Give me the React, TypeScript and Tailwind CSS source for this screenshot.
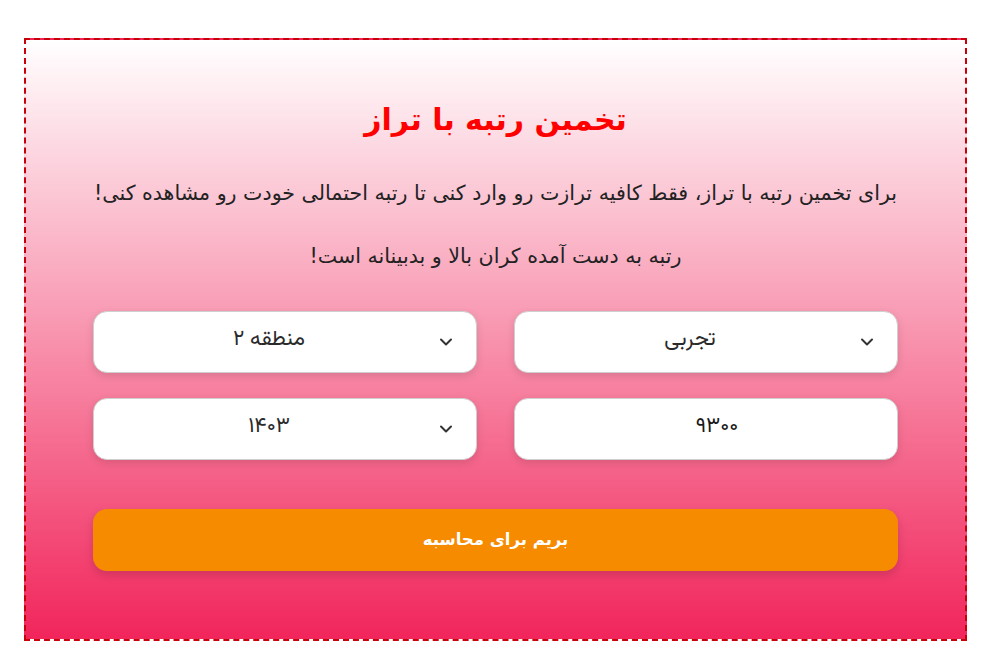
import { ChevronDown } from "lucide-react";

function FakeSelect({ label }: { label: string }) {
    return (
        <div className="relative h-[62px] rounded-[14px] border border-[#cfcfcf] bg-white shadow-[0_3px_8px_rgba(0,0,0,0.12)] flex items-center justify-center pr-[32px]">
            <span className="font-['Vazirmatn',sans-serif] text-[21.5px] leading-[30px] text-[#2a2a2a] pb-1">{label}</span>
            <ChevronDown className="absolute right-[20px] top-1/2 -translate-y-1/2 w-[20px] h-[20px] text-[#333]" strokeWidth={2.4} />
        </div>
    );
}

export default function App() {
    return (
        <div className="min-h-screen bg-white pt-[38px] pl-[24px] font-['DejaVu_Sans',sans-serif]">
            <div
                dir="rtl"
                className="w-[943px] h-[603px] border-2 border-dashed border-[#c8000a] bg-[linear-gradient(to_bottom,#ffffff,#f1255b)] px-[67px] pt-[58px]"
            >
                {/* Header */}
                <h1 className="text-center text-[30px] font-bold text-[#ff0000] leading-[44px]">
                    تخمین رتبه با تراز
                </h1>
                <p className="mt-[36px] text-center text-[20.6px] text-[#222] leading-[30px] whitespace-nowrap">
                    برای تخمین رتبه با تراز، فقط کافیه ترازت رو وارد کنی تا رتبه احتمالی خودت رو مشاهده کنی!
                </p>
                <p className="mt-[33px] text-center text-[20.6px] text-[#222] leading-[30px]">
                    رتبه به دست آمده کران بالا و بدبینانه است!
                </p>

                {/* Form */}
                <div className="mt-[40px] grid grid-cols-2 gap-x-[37px] gap-y-[25px]">
                    <FakeSelect label="تجربی" />
                    <FakeSelect label="منطقه ۲" />
                    <input
                        type="text"
                        defaultValue="۹۳۰۰"
                        className="h-[62px] rounded-[14px] border border-[#cfcfcf] bg-white shadow-[0_3px_8px_rgba(0,0,0,0.12)] text-center font-['Vazirmatn',sans-serif] text-[21.5px] text-[#1a1a1a] pl-[22px] pb-1 outline-none"
                    />
                    <FakeSelect label="۱۴۰۳" />
                </div>

                <button className="mt-[49px] w-full h-[62px] rounded-[14px] bg-[#f68b00] text-white font-bold text-[16.5px] shadow-[0_4px_10px_rgba(0,0,0,0.15)]">
                    بریم برای محاسبه
                </button>
            </div>
        </div>
    );
}
